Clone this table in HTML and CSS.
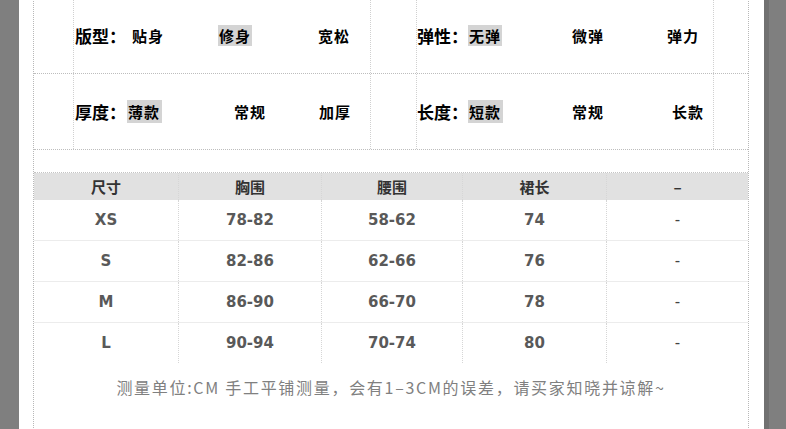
FILE: index.html
```html
<!DOCTYPE html>
<html lang="zh-CN">
<head>
<meta charset="utf-8">
<title>尺码信息</title>
<link rel="stylesheet" href="styles.css">
</head>
<body>
<div class="page">
  <div class="sheet">
    <div class="attrs">
      <div class="arow">
        <div class="cell c-pad1"></div>
        <div class="cell c-main l1"><span class="lbl">版型：</span><span class="opt">贴身</span><span class="opt"><span class="hl">修身</span></span><span class="opt">宽松</span></div>
        <div class="cell c-pad2"></div>
        <div class="cell c-main r1"><span class="lbl">弹性：</span><span class="opt"><span class="hl">无弹</span></span><span class="opt">微弹</span><span class="opt">弹力</span></div>
        <div class="cell c-pad3"></div>
      </div>
      <div class="arow">
        <div class="cell c-pad1"></div>
        <div class="cell c-main l2"><span class="lbl">厚度：</span><span class="opt"><span class="hl wide">薄款</span></span><span class="opt">常规</span><span class="opt">加厚</span></div>
        <div class="cell c-pad2"></div>
        <div class="cell c-main r2"><span class="lbl">长度：</span><span class="opt"><span class="hl wide">短款</span></span><span class="opt">常规</span><span class="opt">长款</span></div>
        <div class="cell c-pad3"></div>
      </div>
    </div>

    <div class="sizes">
      <div class="srow head">
        <div class="sc">尺寸</div><div class="sc">胸围</div><div class="sc">腰围</div><div class="sc">裙长</div><div class="sc">–</div>
      </div>
      <div class="srow">
        <div class="sc">XS</div><div class="sc">78-82</div><div class="sc">58-62</div><div class="sc">74</div><div class="sc dash">-</div>
      </div>
      <div class="srow">
        <div class="sc">S</div><div class="sc">82-86</div><div class="sc">62-66</div><div class="sc">76</div><div class="sc dash">-</div>
      </div>
      <div class="srow">
        <div class="sc">M</div><div class="sc">86-90</div><div class="sc">66-70</div><div class="sc">78</div><div class="sc dash">-</div>
      </div>
      <div class="srow last">
        <div class="sc">L</div><div class="sc">90-94</div><div class="sc">70-74</div><div class="sc">80</div><div class="sc dash">-</div>
      </div>
    </div>

    <p class="note">测量单位:CM 手工平铺测量，会有1–3CM的误差，请买家知晓并谅解~</p>
  </div>
</div>
</body>
</html>
```

FILE: styles.css
```css
*, *::before, *::after {
  box-sizing: border-box;
}
html, body {
  margin: 0;
  padding: 0;
}
body {
  background: #7f7f7f;
  height: 429px;
  overflow: hidden;
}
.page {
  margin-left: 19px;
  width: 750px;
  height: 429px;
  background: #fff;
  border-right: 5px solid #717171;
  overflow: hidden;
}
.sheet {
  margin-left: 14px;
  width: 716px;
  height: 440px;
  border-left: 1px dotted #b8b8b8;
  border-right: 1px dotted #b8b8b8;
  margin-top: -2px;
}

/* attribute table */
.attrs {
  display: flex;
  flex-direction: column;
}
.arow {
  display: grid;
  grid-template-columns: 39px 297px 46px 297px 35px;
  height: 76px;
  border-bottom: 1px dotted #bdbdbd;
}
.cell {
  display: flex;
  align-items: center;
}
.cell + .cell {
  border-left: 1px dotted #d0d0d0;
}
.c-main {
  display: grid;
  align-items: center;
  font-family: "Noto Sans CJK SC", sans-serif;
  font-weight: bold;
  color: #000;
}
.l1 { padding-left: 1px; grid-template-columns: 57px 86px 100px auto; }
.l2 { padding-left: 1px; grid-template-columns: 52px 107px 85px auto; }
.r1 { padding-left: 0; grid-template-columns: 51px 104px 95px auto; }
.r2 { padding-left: 0; grid-template-columns: 51px 104px 100px auto; }
.lbl {
  font-size: 17px;
  line-height: 20px;
}
.opt {
  font-size: 15px;
  line-height: 18px;
  letter-spacing: 1px;
}
.hl {
  background: #d4d4d4;
  padding: 0 1px;
}
.hl.wide {
  padding: 1px 2px 1px 1px;
}

/* size table */
.sizes {
  margin-top: 22px;
  border-top: 1px dotted #c4c4c4;
  font-weight: bold;
}
.srow {
  display: grid;
  grid-template-columns: 144px 143px 141px 144px 142px;
  height: 41px;
  border-bottom: 1px solid #ececec;
}
.srow.head {
  height: 27px;
  background: #e1e1e1;
  border-bottom: 0;
}
.srow.last {
  border-bottom: 0;
  height: 40px;
}
.sc {
  display: flex;
  align-items: center;
  justify-content: center;
  font-family: "DejaVu Sans", "Noto Sans CJK SC", sans-serif;
  font-size: 15px;
  color: #595959;
}
.head .sc {
  font-family: "Noto Sans CJK SC", sans-serif;
  color: #333;
}
.sc + .sc {
  border-left: 1px dotted #d6d6d6;
}
.sc.dash {
  font-weight: normal;
  color: #444;
}

.note {
  margin: 14px 0 0;
  text-align: center;
  font-family: "Noto Sans CJK SC", sans-serif;
  font-size: 16px;
  line-height: 20px;
  color: #808080;
  letter-spacing: 1.7px;
}
```
